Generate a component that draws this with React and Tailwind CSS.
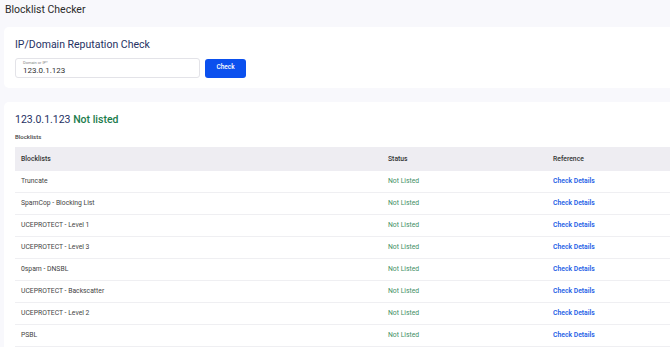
import React, { useState } from 'react';

const rows = [
  'Truncate',
  'SpamCop - Blocking List',
  'UCEPROTECT - Level 1',
  'UCEPROTECT - Level 3',
  '0spam - DNSBL',
  'UCEPROTECT - Backscatter',
  'UCEPROTECT - Level 2',
  'PSBL',
];

export default function App() {
  const [query, setQuery] = useState('123.0.1.123');

  return (
    <div className="w-[670px] h-[347px] overflow-hidden bg-[#f8f8fc] font-['Roboto',sans-serif]">
      <div className="w-[700px]">
        <h1 className="pl-[5px] pt-[3px] h-[27px] text-[10.5px] leading-[14px] text-[#2b2b2b]">Blocklist Checker</h1>

        {/* Search card */}
        <div className="ml-[4px] bg-white rounded-l-[5px] h-[61px] pl-[11px] pt-[11px]">
          <h2 className="text-[10.5px] leading-[14px] text-[#263163]">IP/Domain Reputation Check</h2>
          <div className="flex items-center gap-[5px] mt-[6px]">
            <div className="relative w-[185px] h-[20px] border border-[#e3e3e8] rounded-[3px]">
              <span className="absolute left-[7px] top-[1px] text-[4px] leading-[5px] text-[#888]">Domain or IP*</span>
              <input
                value={query}
                onChange={(e) => setQuery(e.target.value)}
                className="block w-full h-[18px] pl-[7px] pt-[4px] text-[8px] leading-[10px] text-[#333] outline-none bg-transparent"
              />
            </div>
            <button className="w-[41px] h-[19px] bg-[#0b50ee] rounded-[3px] text-white text-[6.5px] font-medium">Check</button>
          </div>
        </div>

        {/* Results card */}
        <div className="ml-[4px] mt-[14px] bg-white rounded-l-[5px] pl-[11px] pt-[11px] h-[300px]">
          <h2 className="text-[10.5px] leading-[14px] text-[#263163]">
            123.0.1.123 <span className="text-[#1c7c4c] font-medium">Not listed</span>
          </h2>
          <div className="mt-[5px] text-[6px] leading-[10px] text-[#444] font-medium">Blocklists</div>
          <div className="mt-[5px] text-[6.8px]">
            <div className="grid grid-cols-[367px_165px_1fr] h-[24px] items-center bg-[#eeedf2] font-medium text-[#333]">
              <div className="pl-[6px]">Blocklists</div>
              <div className="pl-[6px]">Status</div>
              <div className="pl-[6px]">Reference</div>
            </div>
            {rows.map((name) => (
              <div key={name} className="grid grid-cols-[367px_165px_1fr] h-[22px] items-center border-b border-[#efeff2]">
                <div className="pl-[6px] text-[#444]">{name}</div>
                <div className="pl-[6px] text-[#3f8f66]">Not Listed</div>
                <div className="pl-[6px] text-[#1f5fe6] font-semibold">Check Details</div>
              </div>
            ))}
          </div>
        </div>
      </div>
    </div>
  );
}
